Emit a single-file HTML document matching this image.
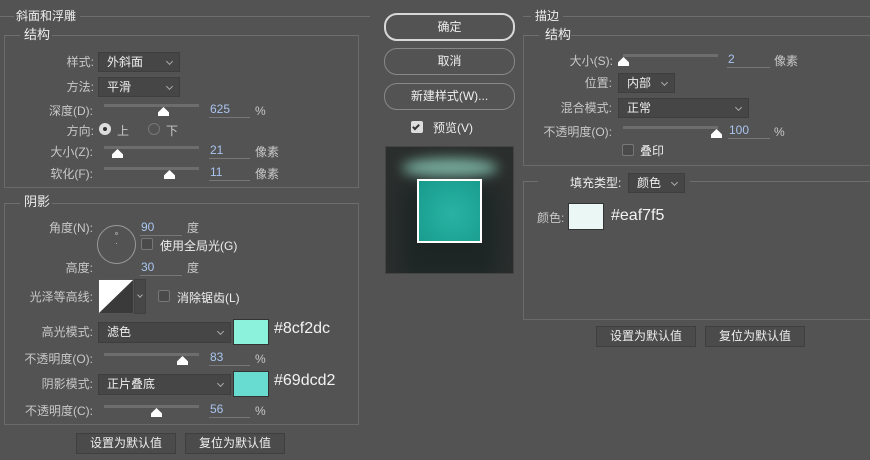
<!DOCTYPE html>
<html><head><meta charset="utf-8">
<style>
*{margin:0;padding:0;box-sizing:border-box}
body{width:870px;height:460px;background:#535353;position:relative;overflow:hidden;font-family:"Liberation Sans","Noto Sans CJK SC",sans-serif;font-size:12px;color:#c8c8c8}
div,span{position:absolute;white-space:nowrap}
.l{line-height:14px}
.r{text-align:right}
.hl{height:1px;background:#6e6e6e}
.box{border:1px solid #6a6a6a}
.sel{background:#464646;border:1px solid #3e3e3e;color:#eee;line-height:18px;padding-left:8px}
.sel:after{content:"";position:absolute;right:7px;top:6px;width:4px;height:4px;border-right:1px solid #aaa;border-bottom:1px solid #aaa;transform:rotate(45deg)}
.tr{height:3px;background:#6d6d6d}
.th{width:11px;height:9px;background:#fff;clip-path:polygon(50% 0,100% 60%,100% 100%,0 100%,0 60%)}
.val{color:#a9c4ee;border-bottom:1px solid #777;height:15px;line-height:13px;padding-left:1px}
.cb{width:12px;height:12px;border:1px solid #777;border-radius:2px;background:#4a4a4a}
.btn{border:1px solid #888;border-radius:13px;text-align:center;color:#eee;line-height:24px}
.fb{background:#4b4b4b;border:1px solid #3f3f3f;text-align:center;line-height:18px;color:#eee}
.hex{font-size:16px;color:#f2f2f2;line-height:18px}
</style></head><body>

<div class="hl" style="left:0;top:16px;width:14px"></div>
<div class="hl" style="left:80px;top:16px;width:290px"></div>
<div class="l" style="left:16px;top:9px;color:#eee">斜面和浮雕</div>

<div class="box" style="left:4px;top:35px;width:355px;height:153px;border-top:none"></div>
<div class="hl" style="left:4px;top:35px;width:16px"></div>
<div class="hl" style="left:52px;top:35px;width:307px"></div>
<div class="l" style="left:24px;top:28px;color:#eee;font-size:13px">结构</div>

<div class="l r" style="right:776px;top:55px">样式:</div>
<div class="sel" style="left:98px;top:52px;width:82px;height:20px">外斜面</div>
<div class="l r" style="right:776px;top:80px">方法:</div>
<div class="sel" style="left:98px;top:77px;width:82px;height:20px">平滑</div>

<div class="l r" style="right:777px;top:104px">深度(D):</div>
<div class="tr" style="left:104px;top:104px;width:95px"></div>
<div class="th" style="left:158px;top:107px"></div>
<div class="val" style="left:209px;top:103px;width:41px">625</div>
<div class="l" style="left:255px;top:104px">%</div>

<div class="l r" style="right:776px;top:124px">方向:</div>
<div style="left:99px;top:123px;width:12px;height:12px;border-radius:50%;background:#ddd"></div>
<div style="left:103px;top:127px;width:4px;height:4px;border-radius:50%;background:#333"></div>
<div class="l" style="left:117px;top:124px">上</div>
<div style="left:148px;top:123px;width:12px;height:12px;border-radius:50%;border:1px solid #777"></div>
<div class="l" style="left:166px;top:124px">下</div>

<div class="l r" style="right:777px;top:145px">大小(Z):</div>
<div class="tr" style="left:104px;top:146px;width:95px"></div>
<div class="th" style="left:112px;top:149px"></div>
<div class="val" style="left:209px;top:144px;width:41px">21</div>
<div class="l" style="left:255px;top:145px">像素</div>

<div class="l r" style="right:777px;top:167px">软化(F):</div>
<div class="tr" style="left:104px;top:167px;width:95px"></div>
<div class="th" style="left:164px;top:170px"></div>
<div class="val" style="left:209px;top:166px;width:41px">11</div>
<div class="l" style="left:255px;top:167px">像素</div>

<div class="box" style="left:4px;top:203px;width:355px;height:222px;border-top:none"></div>
<div class="hl" style="left:4px;top:203px;width:16px"></div>
<div class="hl" style="left:52px;top:203px;width:307px"></div>
<div class="l" style="left:24px;top:195px;color:#eee;font-size:13px">阴影</div>

<div class="l r" style="right:777px;top:221px">角度(N):</div>
<div style="left:97px;top:225px;width:39px;height:39px;border-radius:50%;border:1px solid #9a9a9a"></div>
<div style="left:115px;top:232px;width:3px;height:3px;border-radius:50%;border:1px solid #999"></div>
<div style="left:116px;top:243px;width:1px;height:1px;background:#aaa"></div>
<div class="val" style="left:140px;top:221px;width:42px">90</div>
<div class="l" style="left:187px;top:221px">度</div>
<div class="cb" style="left:141px;top:238px"></div>
<div class="l" style="left:160px;top:239px;color:#eee">使用全局光(G)</div>
<div class="l r" style="right:777px;top:261px">高度:</div>
<div class="val" style="left:140px;top:261px;width:42px">30</div>
<div class="l" style="left:187px;top:261px">度</div>

<div class="l r" style="right:777px;top:290px">光泽等高线:</div>
<div style="left:98px;top:279px;width:36px;height:35px;background:#3a3a3a;border:1px solid #555"></div>
<div style="left:99px;top:280px;width:34px;height:33px;background:#fff;clip-path:polygon(0 0,100% 0,0 100%)"></div>
<div style="left:134px;top:279px;width:12px;height:35px;background:#474747;border:1px solid #404040"></div>
<div style="left:138px;top:293px;width:4px;height:4px;border-right:1px solid #aaa;border-bottom:1px solid #aaa;transform:rotate(45deg)"></div>
<div class="cb" style="left:158px;top:290px"></div>
<div class="l" style="left:177px;top:291px;color:#eee">消除锯齿(L)</div>

<div class="l r" style="right:777px;top:325px">高光模式:</div>
<div class="sel" style="left:98px;top:322px;width:133px;height:21px">滤色</div>
<div style="left:233px;top:319px;width:36px;height:26px;background:#8cf2dc;border:1px solid #333"></div>
<div class="hex" style="left:274px;top:320px">#8cf2dc</div>

<div class="l r" style="right:777px;top:352px">不透明度(O):</div>
<div class="tr" style="left:104px;top:353px;width:95px"></div>
<div class="th" style="left:177px;top:356px"></div>
<div class="val" style="left:209px;top:351px;width:41px">83</div>
<div class="l" style="left:255px;top:352px">%</div>

<div class="l r" style="right:777px;top:377px">阴影模式:</div>
<div class="sel" style="left:98px;top:374px;width:133px;height:21px">正片叠底</div>
<div style="left:233px;top:371px;width:36px;height:26px;background:#69dcd2;border:1px solid #333"></div>
<div class="hex" style="left:274px;top:372px">#69dcd2</div>

<div class="l r" style="right:777px;top:404px">不透明度(C):</div>
<div class="tr" style="left:104px;top:405px;width:95px"></div>
<div class="th" style="left:151px;top:408px"></div>
<div class="val" style="left:209px;top:403px;width:41px">56</div>
<div class="l" style="left:255px;top:404px">%</div>

<div class="fb" style="left:76px;top:433px;width:100px;height:21px">设置为默认值</div>
<div class="fb" style="left:185px;top:433px;width:100px;height:21px">复位为默认值</div>

<div class="btn" style="left:384px;top:13px;width:131px;height:28px;border:2px solid #d8d8d8;line-height:24px">确定</div>
<div class="btn" style="left:384px;top:48px;width:131px;height:27px">取消</div>
<div class="btn" style="left:384px;top:83px;width:131px;height:27px">新建样式(W)...</div>
<div style="left:411px;top:121px;width:12px;height:12px;background:#ddd;border-radius:2px"></div>
<div style="left:414px;top:123px;width:4px;height:7px;border-right:2px solid #333;border-bottom:2px solid #333;transform:rotate(45deg)"></div>
<div class="l" style="left:433px;top:121px;color:#eee">预览(V)</div>
<div style="left:385px;top:146px;width:129px;height:128px;background:#2a2e2d;border:1px solid #444;overflow:hidden">
  <div style="left:16px;top:11px;width:96px;height:20px;border-radius:50%;background:#88c8b4;filter:blur(6px);opacity:.8"></div>
  <div style="left:16px;top:40px;width:96px;height:90px;background:#1a2423;filter:blur(10px);opacity:.8"></div>
  <div style="left:31px;top:32px;width:65px;height:64px;border:2px solid #fff;background:radial-gradient(circle at 55% 55%,#29b3a4,#179a8c)"></div>
</div>

<div class="hl" style="left:523px;top:16px;width:8px"></div>
<div class="hl" style="left:563px;top:16px;width:307px"></div>
<div class="l" style="left:535px;top:9px;color:#eee">描边</div>

<div class="box" style="left:523px;top:35px;width:350px;height:131px;border-top:none"></div>
<div class="hl" style="left:523px;top:35px;width:16px"></div>
<div class="hl" style="left:571px;top:35px;width:300px"></div>
<div class="l" style="left:545px;top:28px;color:#eee;font-size:13px">结构</div>

<div class="l r" style="right:257px;top:54px">大小(S):</div>
<div class="tr" style="left:623px;top:54px;width:95px"></div>
<div class="th" style="left:618px;top:57px"></div>
<div class="val" style="left:727px;top:53px;width:43px">2</div>
<div class="l" style="left:774px;top:54px">像素</div>

<div class="l r" style="right:258px;top:76px">位置:</div>
<div class="sel" style="left:618px;top:73px;width:57px;height:20px">内部</div>
<div class="l r" style="right:258px;top:101px">混合模式:</div>
<div class="sel" style="left:618px;top:98px;width:131px;height:20px">正常</div>

<div class="l r" style="right:258px;top:125px">不透明度(O):</div>
<div class="tr" style="left:623px;top:126px;width:95px"></div>
<div class="th" style="left:711px;top:129px"></div>
<div class="val" style="left:728px;top:124px;width:42px">100</div>
<div class="l" style="left:774px;top:125px">%</div>
<div class="cb" style="left:622px;top:144px"></div>
<div class="l" style="left:640px;top:144px;color:#eee">叠印</div>

<div class="box" style="left:523px;top:181px;width:350px;height:139px;border-top:none"></div>
<div class="hl" style="left:523px;top:181px;width:15px"></div>
<div class="hl" style="left:690px;top:181px;width:180px"></div>
<div class="l" style="left:570px;top:176px;color:#eee">填充类型:</div>
<div class="sel" style="left:628px;top:173px;width:57px;height:20px">颜色</div>
<div class="l" style="left:537px;top:211px">颜色:</div>
<div style="left:568px;top:203px;width:36px;height:27px;background:#eaf7f5;border:1px solid #333"></div>
<div class="hex" style="left:611px;top:207px">#eaf7f5</div>

<div class="fb" style="left:596px;top:326px;width:100px;height:21px">设置为默认值</div>
<div class="fb" style="left:705px;top:326px;width:100px;height:21px">复位为默认值</div>
</body></html>
